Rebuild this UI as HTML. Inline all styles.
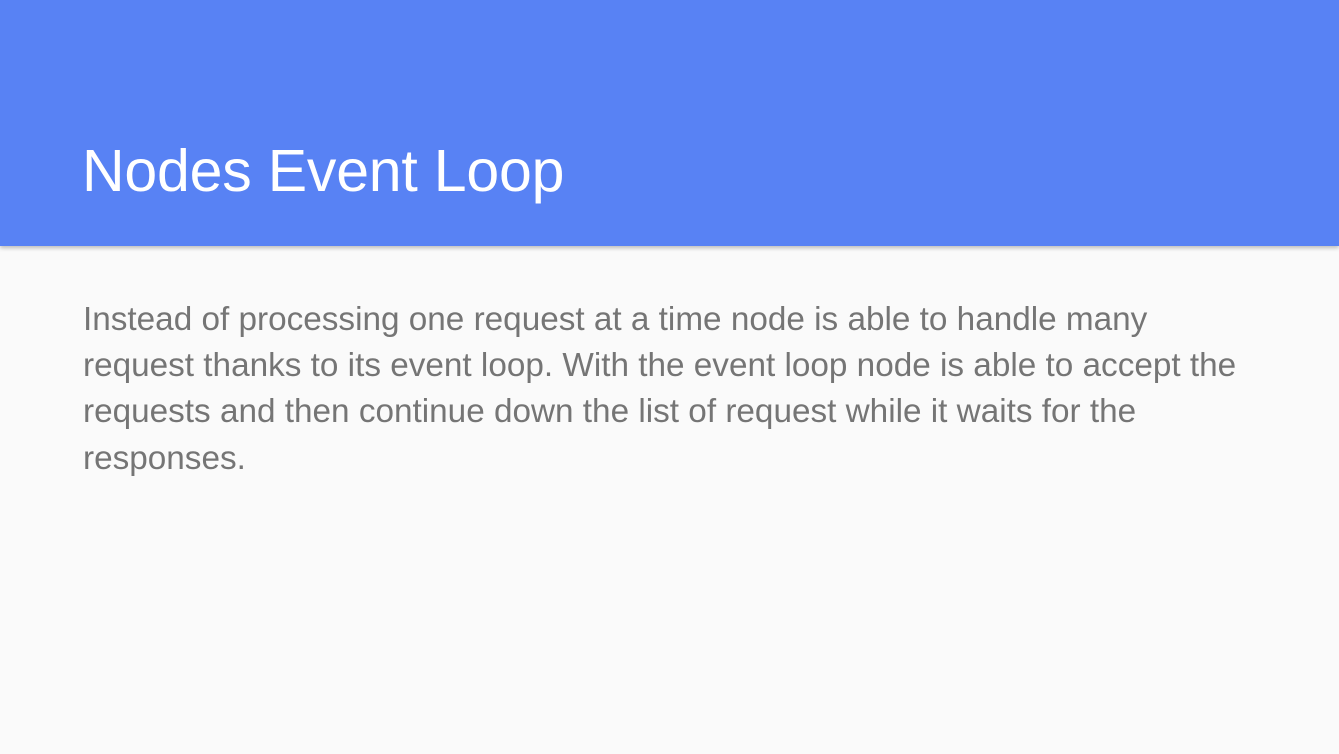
<!DOCTYPE html>
<html><head><meta charset="utf-8"><style>
html,body{margin:0;padding:0;width:1339px;height:754px;background:#fafafa;overflow:hidden;font-family:"Liberation Sans",sans-serif;}
.hdr{position:absolute;left:0;top:0;width:1339px;height:246px;background:#5882f4;box-shadow:0 2px 4px rgba(0,0,0,0.25);}
.t{position:absolute;left:82px;top:136px;font-size:59px;color:#fff;line-height:70px;white-space:nowrap;letter-spacing:-0.2px;}
.b{position:absolute;left:83px;top:297px;font-size:33.3px;line-height:46.2px;color:#757575;white-space:nowrap;letter-spacing:0;}
</style></head><body>
<div class="hdr"><div class="t">Nodes Event Loop</div></div>
<div class="b">Instead of processing one request at a time node is able to handle many<br>request thanks to its event loop. With the event loop node is able to accept the<br>requests and then continue down the list of request while it waits for the<br>responses.</div>
</body></html>
